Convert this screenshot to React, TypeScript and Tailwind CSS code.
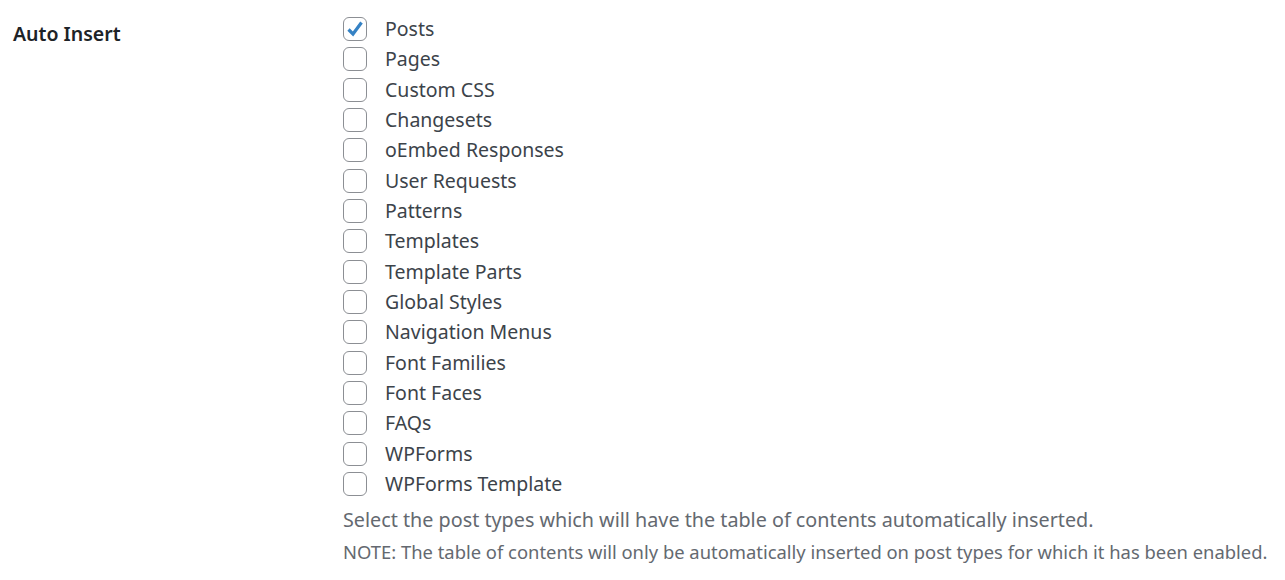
import React from "react";

const items = [
  "Posts",
  "Pages",
  "Custom CSS",
  "Changesets",
  "oEmbed Responses",
  "User Requests",
  "Patterns",
  "Templates",
  "Template Parts",
  "Global Styles",
  "Navigation Menus",
  "Font Families",
  "Font Faces",
  "FAQs",
  "WPForms",
  "WPForms Template",
];

function Box({ checked }: { checked: boolean }) {
  return (
    <span className="w-[24px] h-[24px] rounded-[6px] border-[1.5px] border-[#8c8f94] bg-white flex items-center justify-center shrink-0">
      {checked && (
        <svg width="22" height="22" viewBox="0 0 22 22">
          <path d="M4.5 11.5 L9 16 L17.5 4.5" fill="none" stroke="#3582c4" strokeWidth="3.2" strokeLinecap="butt" strokeLinejoin="miter" />
        </svg>
      )}
    </span>
  );
}

export default function App() {
  return (
    <div className="bg-white w-[1285px] h-[580px] text-[#3c434a]" style={{ fontFamily: '"Noto Sans", "Open Sans", sans-serif' }}>
      <div className="flex pt-[14px]">
        <div className="w-[343px] pl-[13px] pt-[5px] text-[19.5px] font-semibold text-[#1d2327] leading-[30px]">
          Auto Insert
        </div>
        <div className="flex flex-col">
          {items.map((it, i) => (
            <label key={it} className="flex items-center h-[30.33px]">
              <Box checked={i === 0} />
              <span className="ml-[18px] text-[19.5px] leading-[24px]">{it}</span>
            </label>
          ))}
          <p className="mt-[8px] text-[19.75px] leading-[26px] text-[#646970]">
            Select the post types which will have the table of contents automatically inserted.
          </p>
          <p className="mt-[6px] text-[18.4px] leading-[26px] text-[#646970]">
            NOTE: The table of contents will only be automatically inserted on post types for which it has been enabled.
          </p>
        </div>
      </div>
    </div>
  );
}
